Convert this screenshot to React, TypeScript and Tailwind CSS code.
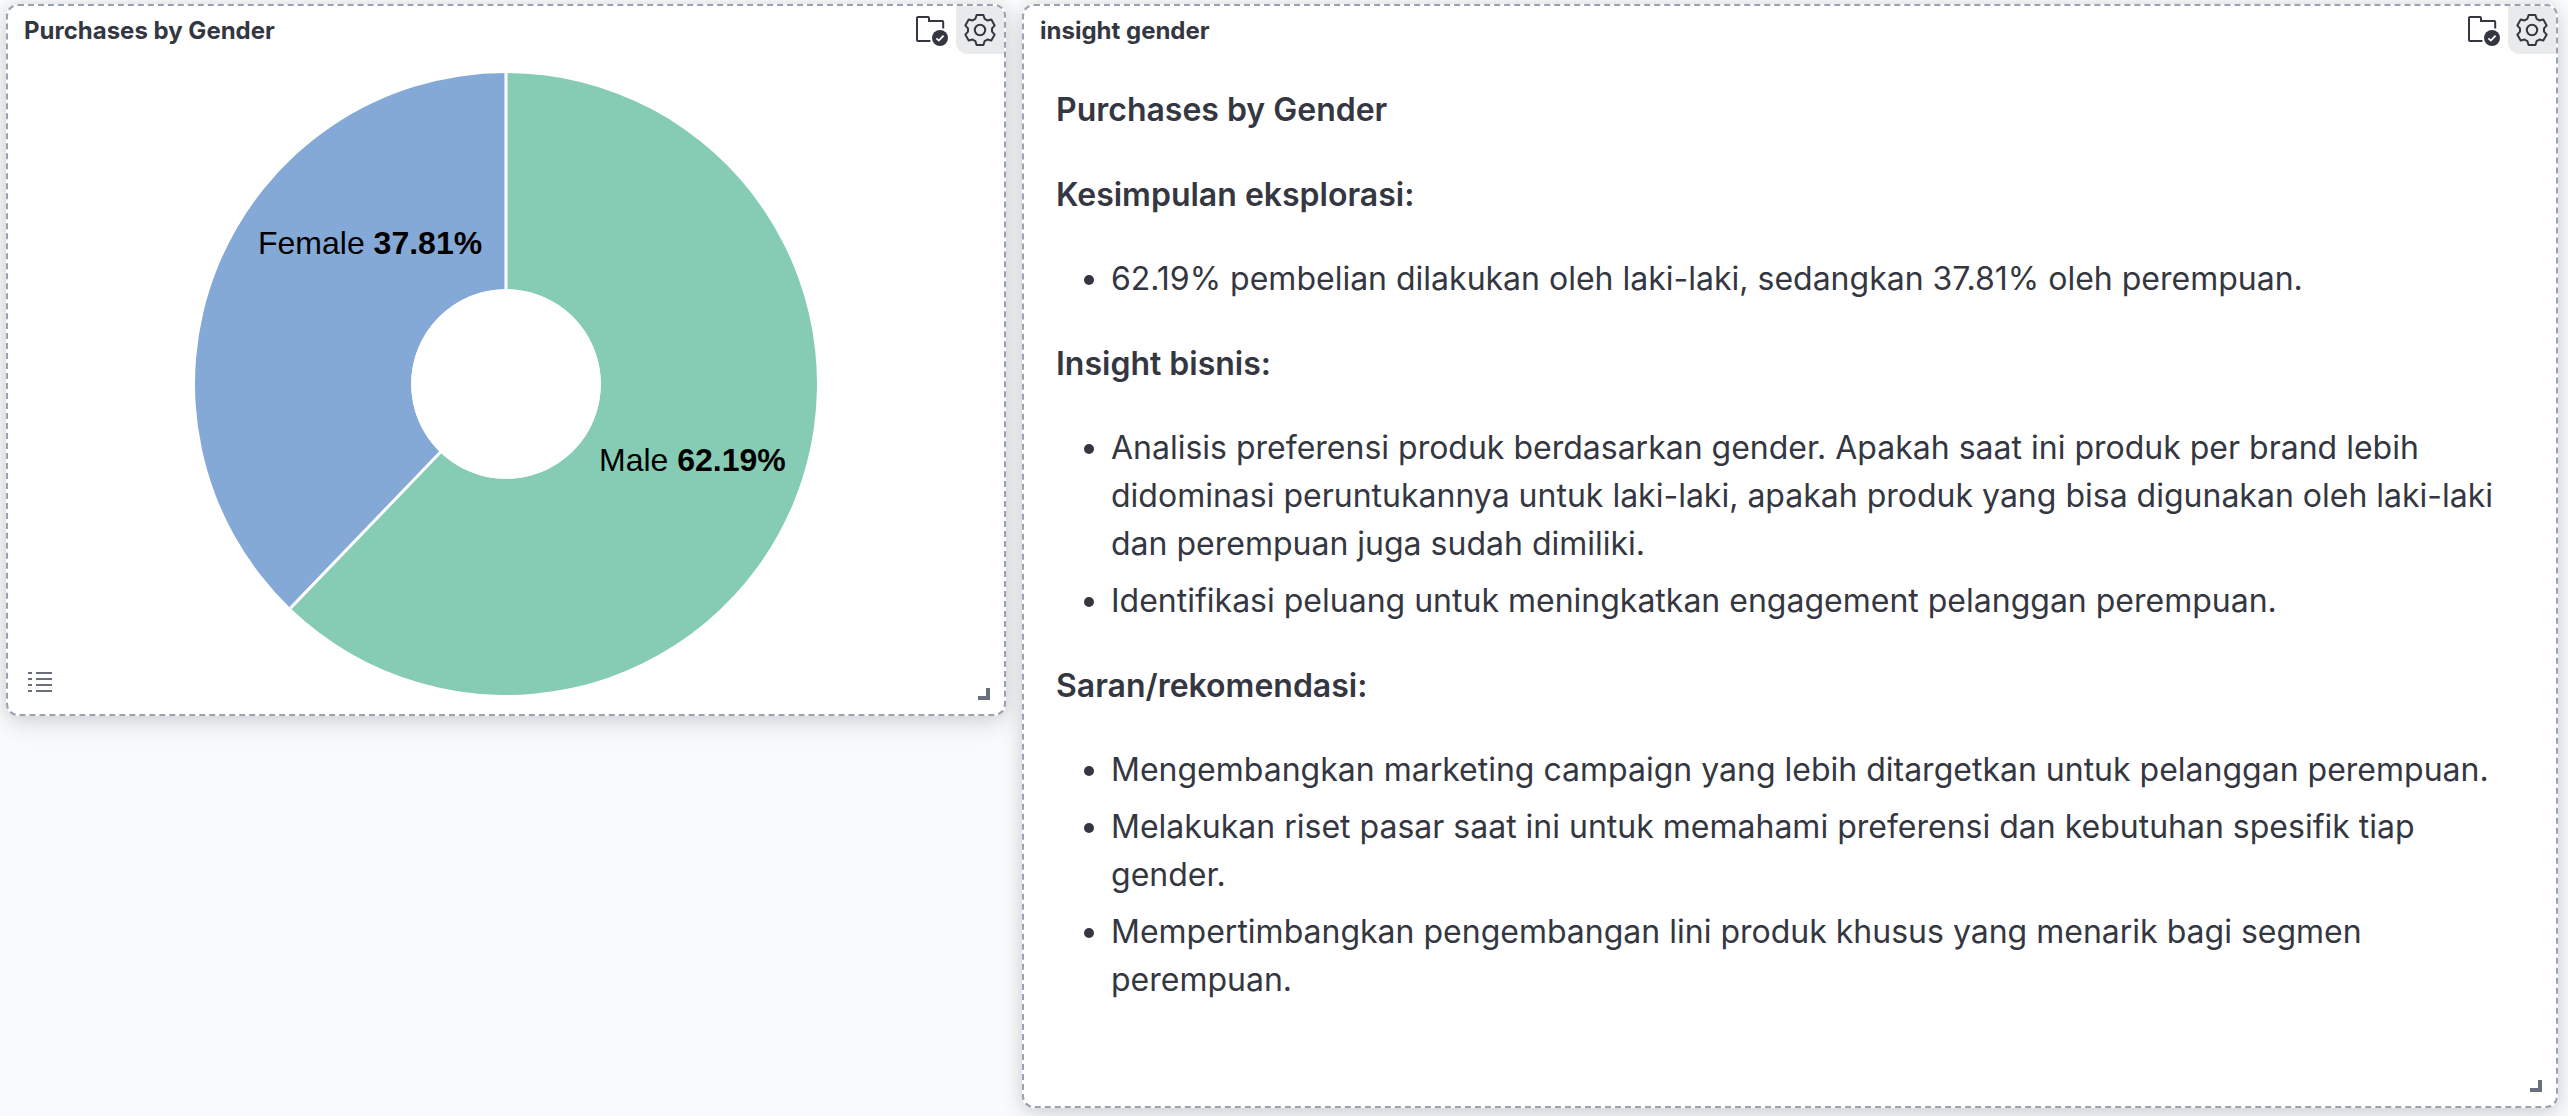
import React from "react";

const dash = "border-2 border-dashed border-[#98a2b3] rounded-xl";
const shadow = "shadow-[0_0_16px_rgba(0,0,0,0.09),0_6px_24px_rgba(0,0,0,0.07),0_14px_32px_rgba(0,0,0,0.05)]";

function FolderCheckIcon() {
  return (
    <svg viewBox="0 0 16 16" className="size-8" fill="none" aria-hidden="true">
      <path
        d="M7.2 13.5H1a.5.5 0 0 1-.5-.5V2a.5.5 0 0 1 .5-.5h5a.5.5 0 0 1 .5.5v1.5h6.6a.5.5 0 0 1 .5.5v3.2"
        stroke="currentColor"
        strokeWidth="1"
      />
      <circle cx="12" cy="12" r="4" fill="currentColor" />
      <path d="m10.2 12.2 1.2 1.1 2.4-2.5" stroke="#fff" strokeWidth=".9" />
    </svg>
  );
}

function GearIcon() {
  return (
    <svg
      viewBox="0 0 16 16"
      className="size-8"
      fill="none"
      stroke="currentColor"
      strokeWidth="1"
      strokeLinejoin="round"
      aria-hidden="true"
    >
      <circle cx="8" cy="8" r="2.6" />
      <path d="M6.3.5H9.7L10.3 2.4 11.7 3.2 13.65 2.78 15.35 5.72 14 7.19V8.81L15.35 10.28 13.65 13.22 11.7 12.8 10.3 13.6 9.7 15.5H6.3L5.7 13.6 4.3 12.8 2.35 13.22.65 10.28 2 8.81V7.19L.65 5.72 2.35 2.78 4.3 3.2 5.7 2.4Z" />
    </svg>
  );
}

function LegendIcon() {
  return (
    <svg viewBox="0 0 24 20" className="h-5 w-6" fill="currentColor" shapeRendering="crispEdges" aria-hidden="true">
      <path d="M0 0h4v2H0zM8 0h16v2H8zM0 6h4v2H0zM8 6h16v2H8zM0 12h4v2H0zM8 12h16v2H8zM0 18h4v2H0zM8 18h16v2H8z" />
    </svg>
  );
}

function Panel({ title, className, children }: { title: string; className: string; children: React.ReactNode }) {
  return (
    <section className={`relative flex flex-col bg-white ${dash} ${shadow} ${className}`}>
      <header className="flex h-12 shrink-0 items-start">
        <h2 className="grow pl-4 text-2xl leading-[50px] font-bold">{title}</h2>
        <button type="button" aria-label="Saved to library" className="flex size-12 items-center justify-center">
          <FolderCheckIcon />
        </button>
        <button
          type="button"
          aria-label="Panel options"
          className="flex size-12 items-center justify-center rounded-tr-[10px] rounded-bl-xl bg-[#e9eaeb]"
        >
          <GearIcon />
        </button>
      </header>
      {children}
      <span className="absolute right-3.5 bottom-3.5 size-3 border-r-4 border-b-4 border-[#69707d]" />
    </section>
  );
}

const CENTER = 246;
const OUTER = 246;
const INNER = 75;

function PieSlice({ from, to, color }: { from: number; to: number; color: string }) {
  const point = (share: number, radius: number) =>
    `${CENTER + radius * Math.sin(share * 2 * Math.PI)} ${CENTER - radius * Math.cos(share * 2 * Math.PI)}`;
  const large = to - from > 0.5 ? 1 : 0;
  return (
    <path
      d={`M${point(from, OUTER)}A${OUTER} ${OUTER} 0 ${large} 1 ${point(to, OUTER)}L${point(to, INNER)}A${INNER} ${INNER} 0 ${large} 0 ${point(from, INNER)}Z`}
      fill={color}
    />
  );
}

function GenderChart() {
  const split = 0.6219;
  const angle = split * 2 * Math.PI;
  return (
    <svg viewBox="0 0 492 492" className="w-[622px]" role="img" aria-label="Purchases by gender">
      <PieSlice from={0} to={split} color="#86cbb4" />
      <PieSlice from={split} to={1} color="#85a9d6" />
      <path
        d={`M${CENTER} 0V${CENTER}L${CENTER + OUTER * Math.sin(angle)} ${CENTER - OUTER * Math.cos(angle)}`}
        stroke="#fff"
        strokeWidth="2.4"
        fill="none"
      />
      <circle cx={CENTER} cy={CENTER} r={INNER} fill="#fff" />
    </svg>
  );
}

function Bullets({ items }: { items: string[] }) {
  return (
    <ul className="mt-9 flex list-disc flex-col gap-[9px] pl-[55px]">
      {items.map((item) => (
        <li key={item}>{item}</li>
      ))}
    </ul>
  );
}

export default function App() {
  return (
    <main className="min-h-screen bg-[#fafbfd] font-['Inter',sans-serif] text-[#343741]">
      <div className="flex items-start gap-4 pt-1 pr-2.5 pb-2 pl-1.5">
        <Panel title="Purchases by Gender" className="h-[712px] w-[1000px] shrink-0">
          <div className="relative flex grow items-center justify-center">
            <GenderChart />
            <p className="absolute top-[171px] left-[250px] font-['Liberation_Sans',sans-serif] text-[32px] leading-9 text-black">
              Female <b>37.81%</b>
            </p>
            <p className="absolute top-[388px] left-[591px] font-['Liberation_Sans',sans-serif] text-[32px] leading-9 text-black">
              Male <b>62.19%</b>
            </p>
          </div>
          <button type="button" aria-label="Toggle legend" className="absolute bottom-[22px] left-5 text-[#69707d]">
            <LegendIcon />
          </button>
        </Panel>
        <Panel title="insight gender" className="min-w-0 grow">
          <div className="flex flex-col gap-[37px] px-8 pt-8 pb-[102px] text-[32px] leading-12">
            <h3 className="font-semibold">Purchases by Gender</h3>
            <div>
              <h3 className="font-semibold">Kesimpulan eksplorasi:</h3>
              <Bullets items={["62.19% pembelian dilakukan oleh laki-laki, sedangkan 37.81% oleh perempuan."]} />
            </div>
            <div>
              <h3 className="font-semibold">Insight bisnis:</h3>
              <Bullets
                items={[
                  "Analisis preferensi produk berdasarkan gender. Apakah saat ini produk per brand lebih didominasi peruntukannya untuk laki-laki, apakah produk yang bisa digunakan oleh laki-laki dan perempuan juga sudah dimiliki.",
                  "Identifikasi peluang untuk meningkatkan engagement pelanggan perempuan.",
                ]}
              />
            </div>
            <div>
              <h3 className="font-semibold">Saran/rekomendasi:</h3>
              <Bullets
                items={[
                  "Mengembangkan marketing campaign yang lebih ditargetkan untuk pelanggan perempuan.",
                  "Melakukan riset pasar saat ini untuk memahami preferensi dan kebutuhan spesifik tiap gender.",
                  "Mempertimbangkan pengembangan lini produk khusus yang menarik bagi segmen perempuan.",
                ]}
              />
            </div>
          </div>
        </Panel>
      </div>
    </main>
  );
}
